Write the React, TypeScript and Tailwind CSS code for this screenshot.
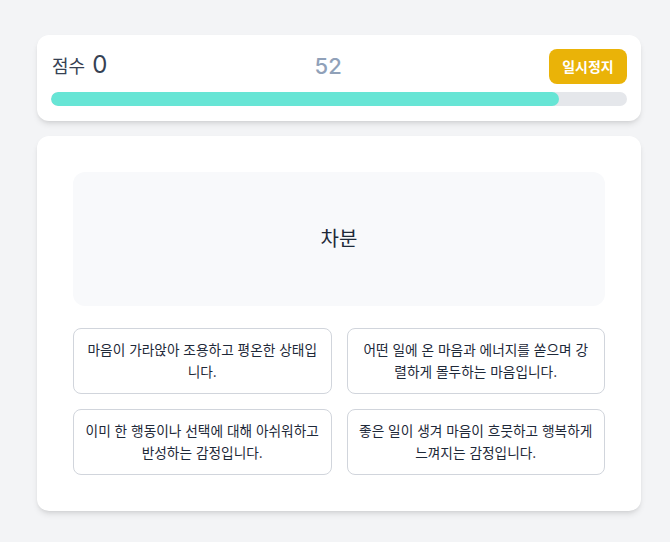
const options = [
  "마음이 가라앉아 조용하고 평온한 상태입니다.",
  "어떤 일에 온 마음과 에너지를 쏟으며 강렬하게 몰두하는 마음입니다.",
  "이미 한 행동이나 선택에 대해 아쉬워하고 반성하는 감정입니다.",
  "좋은 일이 생겨 마음이 흐뭇하고 행복하게 느껴지는 감정입니다.",
];

const progress = 88.2;

export default function App() {
  return (
    <div
      className="min-h-screen w-full bg-[#f3f4f6] pl-[37px] pt-[35px] pb-8"
      style={{ fontFamily: '"Inter", "Noto Sans CJK KR", sans-serif' }}
    >
      <div className="flex w-[604px] flex-col gap-2 rounded-xl bg-white px-3.5 pt-3.5 pb-[15px] shadow-md">
        <div className="flex items-center justify-between">
          <div className="flex items-baseline gap-[7px] pl-px text-gray-700">
            <span className="text-lg">점수</span>
            <span className="text-2xl leading-none">0</span>
          </div>
          <div className="text-[22px] font-medium text-slate-400">52</div>
          <button className="h-[35px] w-[78px] rounded-lg bg-[#eab308] text-sm font-bold text-white">
            일시정지
          </button>
        </div>
        <div className="h-3.5 w-full overflow-hidden rounded-full bg-gray-200">
          <div className="h-full rounded-full bg-[#67e5d5]" style={{ width: `${progress}%` }} />
        </div>
      </div>

      <div className="mt-[15px] w-[604px] rounded-xl bg-white p-9 shadow-md">
        <div className="flex h-[134px] items-center justify-center rounded-xl bg-[#f8f9fb] text-xl text-gray-800">
          차분
        </div>
        <div className="mt-[22px] grid grid-cols-2 gap-x-[15px] gap-y-[15px]">
          {options.map((text) => (
            <button
              key={text}
              className="h-[66px] rounded-lg border border-gray-300 bg-white px-[10px] text-center text-[13.7px] leading-[22px] text-gray-800"
            >
              {text}
            </button>
          ))}
        </div>
      </div>
    </div>
  );
}
